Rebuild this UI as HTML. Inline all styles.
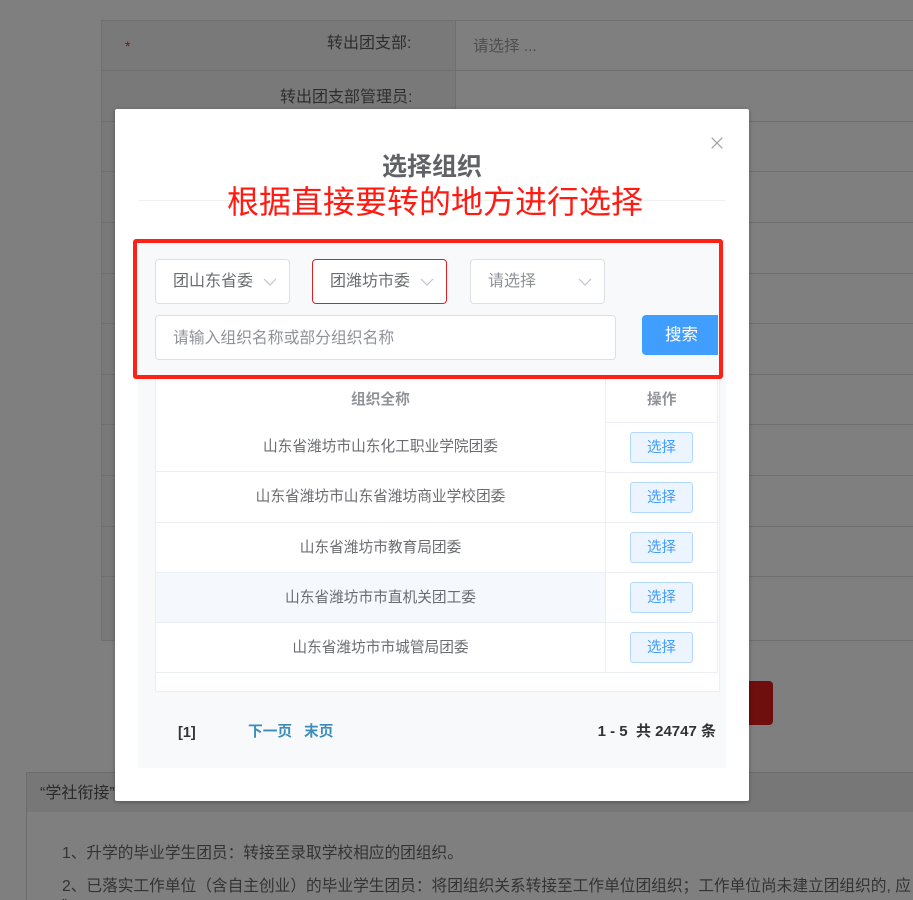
<!DOCTYPE html>
<html lang="zh"><head><meta charset="utf-8"><style>
html,body{margin:0;padding:0;width:913px;height:900px;overflow:hidden;background:#7f7f7f}
*{box-sizing:border-box}
body{font-family:"Liberation Sans","Noto Sans CJK SC",sans-serif;position:relative}
.a{position:absolute;white-space:nowrap}
.l{position:absolute;left:101px;right:0;height:1px;background:#6f6f6f}
.sel{position:absolute;top:259px;width:135px;height:45px;background:#fff;border:1px solid #dcdfe6;border-radius:4px;font-size:16px;color:#6a6c70;line-height:43px;padding-left:17px}
.sel svg{position:absolute;top:15px;right:12px}
.row{position:absolute;left:156px;width:449px;height:50px;border-bottom:1px solid #ebeef5;text-align:center;font-size:14.7px;color:#6a6c70;line-height:51px}
.cell{position:absolute;left:606px;width:111px;height:50px;border-bottom:1px solid #ebeef5;background:#fff}
.btn{position:absolute;left:24px;top:9px;width:63px;height:31px;background:#ecf5ff;border:1px solid #b3d8ff;border-radius:3px;color:#409eff;font-size:14.5px;line-height:31px;text-align:center}
</style></head><body>
<!-- background form -->
<div class="a" style="left:101px;top:20px;width:354px;height:620px;background:#797979"></div>
<div class="a" style="left:101px;top:20px;width:1px;height:621px;background:#6f6f6f"></div>
<div class="a" style="left:455px;top:20px;width:1px;height:620px;background:#6f6f6f"></div>
<div class="l" style="top:20px"></div><div class="l" style="top:70px"></div><div class="l" style="top:121px"></div><div class="l" style="top:171px"></div><div class="l" style="top:222px"></div><div class="l" style="top:273px"></div><div class="l" style="top:323px"></div><div class="l" style="top:374px"></div><div class="l" style="top:424px"></div><div class="l" style="top:475px"></div><div class="l" style="top:526px"></div><div class="l" style="top:576px"></div><div class="l" style="top:640px"></div>
<div class="a" style="left:125px;top:38px;font-size:14px;color:#7a0f0f">*</div>
<div class="a" style="left:327px;top:29px;font-size:16px;color:#2e2e2e">转出团支部:</div>
<div class="a" style="left:280px;top:83px;font-size:16px;color:#2e2e2e">转出团支部管理员:</div>
<div class="a" style="left:473px;top:34px;font-size:15.5px;color:#4f4f4f">请选择 ...</div>
<div class="a" style="left:600px;top:681px;width:173px;height:44px;background:#6f0f0d;border-radius:4px"></div>
<div class="a" style="left:26px;top:772px;width:887px;height:128px;border-left:1px solid #6c6c6c;border-top:1px solid #6c6c6c"></div>
<div class="a" style="left:27px;top:773px;width:886px;height:39px;background:#777"></div>
<div class="a" style="left:40px;top:779px;font-size:16px;color:#2a2a2a">“学社衔接”</div>
<div class="a" style="left:62px;top:840px;font-size:15.7px;color:#333">1、升学的毕业学生团员：转接至录取学校相应的团组织。</div>
<div class="a" style="left:62px;top:873px;font-size:15.7px;color:#333">2、已落实工作单位（含自主创业）的毕业学生团员：将团组织关系转接至工作单位团组织；工作单位尚未建立团组织的, 应</div>
<div class="a" style="left:62px;top:897px;font-size:15.7px;color:#333">”</div>
<!-- modal -->
<div class="a" style="left:115px;top:109px;width:634px;height:692px;background:#fff;border-radius:2px;box-shadow:0 1px 4px rgba(0,0,0,.3)"></div>
<svg class="a" style="left:711px;top:137px" width="12" height="12" viewBox="0 0 12 12"><path d="M.7.7 11.3 11.3M11.3.7.7 11.3" stroke="#9b9ea5" stroke-width="1.1" fill="none"/></svg>
<div class="a" style="left:382px;top:151px;font-size:25px;line-height:32px;font-weight:bold;color:#606266">选择组织</div>
<div class="a" style="left:138px;top:200px;width:588px;height:1px;background:#eff0f2"></div>
<div class="a" style="left:227px;top:181px;font-size:32px;line-height:42px;color:#ff1a12">根据直接要转的地方进行选择</div>
<div class="a" style="left:138px;top:240px;width:588px;height:528px;background:#f8f9fb"></div>
<div class="sel" style="left:155px">团山东省委<svg width="14" height="14" viewBox="0 0 14 14"><path d="M1 4l6 6 6-6" stroke="#c0c4cc" stroke-width="1.2" fill="none"/></svg></div>
<div class="sel" style="left:312px;border-color:#e02020">团潍坊市委<svg width="14" height="14" viewBox="0 0 14 14"><path d="M1 4l6 6 6-6" stroke="#c0c4cc" stroke-width="1.2" fill="none"/></svg></div>
<div class="sel" style="left:470px;color:#8f9299">请选择<svg width="14" height="14" viewBox="0 0 14 14"><path d="M1 4l6 6 6-6" stroke="#c0c4cc" stroke-width="1.2" fill="none"/></svg></div>
<div class="a" style="left:155px;top:315px;width:461px;height:45px;background:#fff;border:1px solid #dcdfe6;border-radius:4px;font-size:15.8px;color:#8f9299;line-height:45px;padding-left:17px">请输入组织名称或部分组织名称</div>
<div class="a" style="left:642px;top:315px;width:76px;height:40px;background:#409eff;border-radius:4px 0 0 4px;color:#fff;font-size:16.5px;line-height:40px;text-align:center;padding-left:3px">搜索</div>
<!-- table -->
<div class="a" style="left:155px;top:379px;width:565px;height:313px;background:#fff;border:1px solid #ebeef5;border-top:0"></div>
<div class="a" style="left:605px;top:379px;width:1px;height:294px;background:#ebeef5"></div>
<div class="a" style="left:717px;top:379px;width:1px;height:294px;background:#ebeef5"></div>
<div class="a" style="left:351px;top:388px;font-size:14.7px;font-weight:bold;color:#909399">组织全称</div>
<div class="a" style="left:647px;top:388px;font-size:14.7px;font-weight:bold;color:#909399">操作</div>
<div class="a" style="left:606px;top:422px;width:111px;height:1px;background:#ebeef5"></div>
<div class="row" style="top:422px">山东省潍坊市山东化工职业学院团委</div>
<div class="row" style="top:472px;height:51px">山东省潍坊市山东省潍坊商业学校团委</div>
<div class="row" style="top:523px">山东省潍坊市教育局团委</div>
<div class="row" style="top:573px;background:#f5f8fd">山东省潍坊市市直机关团工委</div>
<div class="row" style="top:623px">山东省潍坊市市城管局团委</div>
<div class="cell" style="top:423px"><div class="btn">选择</div></div>
<div class="cell" style="top:473px"><div class="btn">选择</div></div>
<div class="cell" style="top:523px"><div class="btn">选择</div></div>
<div class="cell" style="top:573px"><div class="btn">选择</div></div>
<div class="cell" style="top:623px"><div class="btn">选择</div></div>
<!-- pagination -->
<div class="a" style="left:178px;top:725px;font-size:14.5px;font-weight:bold;color:#333">[1]</div>
<div class="a" style="left:248px;top:720px;font-size:14.7px;font-weight:bold;color:#3c8dbc">下一页</div>
<div class="a" style="left:304px;top:720px;font-size:14.7px;font-weight:bold;color:#3c8dbc">末页</div>
<div class="a" style="right:197px;top:720px;font-size:15px;font-weight:bold;color:#333;white-space:pre">1 - 5  共 24747 条</div>
<!-- red annotation -->
<div class="a" style="left:133px;top:239px;width:590px;height:140px;border:4px solid #ff2016;border-radius:3px"></div>
</body></html>
